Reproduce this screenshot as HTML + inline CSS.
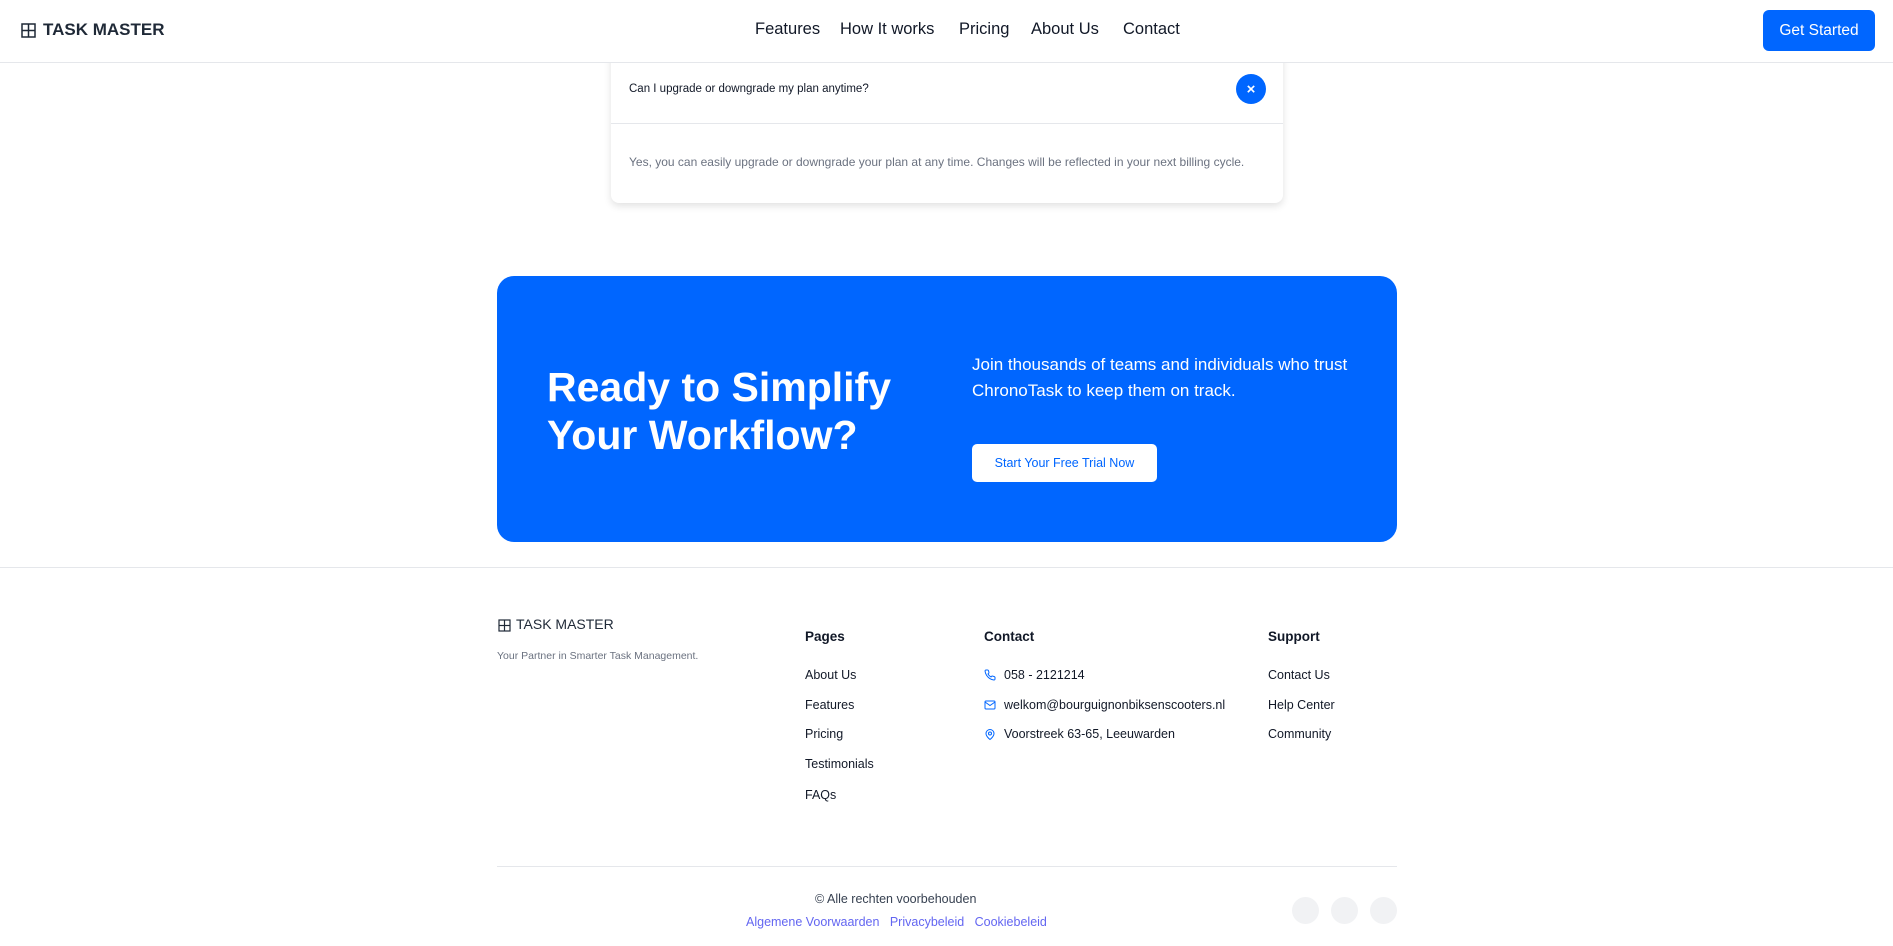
<!DOCTYPE html>
<html><head><meta charset="utf-8"><style>
*{margin:0;padding:0;box-sizing:border-box}
body{width:1893px;height:946px;overflow:hidden;background:#fff;font-family:"Liberation Sans",sans-serif;color:#111827;position:relative}
.a{position:absolute;white-space:nowrap}
nav{position:absolute;left:0;top:0;width:1893px;height:63px;border-bottom:1px solid #e5e7eb;background:#fff;z-index:2}
.nl{font-size:16.5px;top:20px;color:#111827}
.btn{left:1763px;top:10px;width:112px;height:41px;background:#0066ff;color:#fff;border-radius:6px;font-size:15.5px;display:flex;align-items:center;justify-content:center}
.card{left:611px;top:40px;width:672px;height:163px;border-radius:8px;box-shadow:0 3px 8px rgba(0,0,0,.12);background:#fff}
.cta{left:497px;top:276px;width:900px;height:266px;border-radius:17px;background:#0066ff}
.f{font-size:12.5px;color:#111827}
.fh{font-size:13.5px;font-weight:bold;color:#111827}
.soc{width:27px;height:27px;border-radius:50%;background:#f1f2f4;top:897px}
</style></head><body>
<nav>
<svg class="a" style="left:21px;top:23px" width="15" height="15" viewBox="0 0 15 15" fill="none" stroke="#1f2937" stroke-width="1.5"><rect x="1" y="1" width="13" height="13"/><line x1="7.5" y1="1" x2="7.5" y2="14"/><line x1="1" y1="7.5" x2="14" y2="7.5"/></svg>
<div class="a" style="left:43px;top:20px;font-size:17px;font-weight:bold;color:#1f2937">TASK MASTER</div>
<div class="a nl" style="left:755px">Features</div>
<div class="a nl" style="left:840px">How It works</div>
<div class="a nl" style="left:959px">Pricing</div>
<div class="a nl" style="left:1031px">About Us</div>
<div class="a nl" style="left:1123px">Contact</div>
<div class="a btn">Get Started</div>
</nav>
<div class="a card">
<div class="a" style="left:18px;top:43px;font-size:11.5px;color:#111827">Can I upgrade or downgrade my plan anytime?</div>
<div class="a" style="left:625px;top:34px;width:30px;height:30px;border-radius:50%;background:#0066ff;color:#fff;font-size:15px;font-weight:bold;display:flex;align-items:center;justify-content:center">×</div>
<div class="a" style="left:0;top:83px;width:672px;height:1px;background:#e5e7eb"></div>
<div class="a" style="left:18px;top:115px;font-size:12px;color:#6b7280">Yes, you can easily upgrade or downgrade your plan at any time. Changes will be reflected in your next billing cycle.</div>
</div>
<div class="a cta">
<div class="a" style="left:50px;top:87px;font-size:41px;line-height:48px;font-weight:bold;color:#fff">Ready to Simplify<br>Your Workflow?</div>
<div class="a" style="left:475px;top:76px;font-size:17px;line-height:26px;color:#fff">Join thousands of teams and individuals who trust<br>ChronoTask to keep them on track.</div>
<div class="a" style="left:475px;top:168px;width:185px;height:38px;background:#fff;border-radius:5px;color:#0066ff;font-size:12.5px;display:flex;align-items:center;justify-content:center">Start Your Free Trial Now</div>
</div>
<div class="a" style="left:0;top:567px;width:1893px;height:1px;background:#e5e7eb"></div>
<svg class="a" style="left:498px;top:619px" width="13" height="13" viewBox="0 0 13 13" fill="none" stroke="#1f2937" stroke-width="1.2"><rect x="1" y="1" width="11" height="11"/><line x1="6.5" y1="1" x2="6.5" y2="12"/><line x1="1" y1="6.5" x2="12" y2="6.5"/></svg>
<div class="a" style="left:516px;top:616px;font-size:14px;color:#1f2937">TASK MASTER</div>
<div class="a" style="left:497px;top:650px;font-size:10.5px;color:#6b7280">Your Partner in Smarter Task Management.</div>
<div class="a fh" style="left:805px;top:629px">Pages</div>
<div class="a f" style="left:805px;top:668px">About Us</div>
<div class="a f" style="left:805px;top:698px">Features</div>
<div class="a f" style="left:805px;top:727px">Pricing</div>
<div class="a f" style="left:805px;top:757px">Testimonials</div>
<div class="a f" style="left:805px;top:788px">FAQs</div>
<div class="a fh" style="left:984px;top:629px">Contact</div>
<svg class="a" style="left:984px;top:669px" width="12" height="12" viewBox="0 0 24 24" fill="none" stroke="#0066ff" stroke-width="2"><path d="M22 16.9v3a2 2 0 0 1-2.2 2 19.8 19.8 0 0 1-8.6-3.1 19.5 19.5 0 0 1-6-6A19.8 19.8 0 0 1 2.1 4.2 2 2 0 0 1 4.1 2h3a2 2 0 0 1 2 1.7c.1 1 .4 1.9.7 2.8a2 2 0 0 1-.5 2.1L8 9.9a16 16 0 0 0 6 6l1.3-1.3a2 2 0 0 1 2.1-.4c.9.3 1.8.6 2.8.7a2 2 0 0 1 1.7 2z"/></svg>
<div class="a f" style="left:1004px;top:668px">058 - 2121214</div>
<svg class="a" style="left:984px;top:699px" width="12" height="12" viewBox="0 0 24 24" fill="none" stroke="#0066ff" stroke-width="2"><rect x="2" y="4" width="20" height="16" rx="2"/><path d="M2 6l10 7 10-7"/></svg>
<div class="a f" style="left:1004px;top:698px">welkom@bourguignonbiksenscooters.nl</div>
<svg class="a" style="left:984px;top:728px" width="12" height="13" viewBox="0 0 24 24" fill="none" stroke="#0066ff" stroke-width="2"><path d="M20 10c0 6-8 12-8 12S4 16 4 10a8 8 0 0 1 16 0z"/><circle cx="12" cy="10" r="3"/></svg>
<div class="a f" style="left:1004px;top:727px">Voorstreek 63-65, Leeuwarden</div>
<div class="a fh" style="left:1268px;top:629px">Support</div>
<div class="a f" style="left:1268px;top:668px">Contact Us</div>
<div class="a f" style="left:1268px;top:698px">Help Center</div>
<div class="a f" style="left:1268px;top:727px">Community</div>
<div class="a" style="left:497px;top:866px;width:900px;height:1px;background:#e5e7eb"></div>
<div class="a" style="left:815px;top:892px;font-size:12.5px;color:#374151">© Alle rechten voorbehouden</div>
<div class="a" style="left:746px;top:915px;font-size:12.5px;color:#6366f1">Algemene Voorwaarden &nbsp;&nbsp;Privacybeleid &nbsp;&nbsp;Cookiebeleid</div>
<div class="a soc" style="left:1292px"></div>
<div class="a soc" style="left:1331px"></div>
<div class="a soc" style="left:1370px"></div>
</body></html>
